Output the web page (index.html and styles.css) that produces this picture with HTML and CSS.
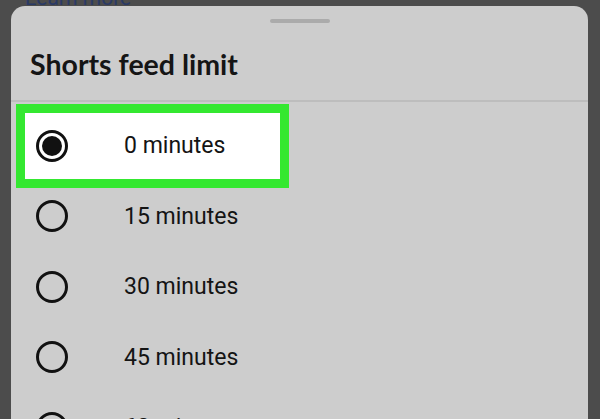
FILE: index.html
```html
<!DOCTYPE html>
<html lang="en">
<head>
  <meta charset="UTF-8" />
  <meta name="viewport" content="width=device-width, initial-scale=1.0" />
  <title>Shorts feed limit</title>
  <link rel="stylesheet" href="styles.css">
</head>
<body>
  <div class="behind">
    <a class="learn-more" href="#">Learn more</a>
  </div>

  <div class="sheet">
    <div class="handle"></div>
    <h1 class="sheet-title">Shorts feed limit</h1>

    <ul class="options">
      <li class="option highlight">
        <span class="radio checked"></span>
        <span class="label">0 minutes</span>
      </li>
      <li class="option">
        <span class="radio"></span>
        <span class="label">15 minutes</span>
      </li>
      <li class="option">
        <span class="radio"></span>
        <span class="label">30 minutes</span>
      </li>
      <li class="option">
        <span class="radio"></span>
        <span class="label">45 minutes</span>
      </li>
      <li class="option">
        <span class="radio"></span>
        <span class="label">60 minutes</span>
      </li>
    </ul>
  </div>
</body>
</html>
```

FILE: styles.css
```css
*, *::before, *::after {
  box-sizing: border-box;
  margin: 0;
  padding: 0;
}
html, body {
  height: 100%;
  overflow: hidden;
}
body {
  background: #4c4c4c; /* dimmed page behind the sheet */
  font-family: Roboto, 'Liberation Sans', sans-serif;
  color: #1a1a1a;
}
.behind {
  height: 6px;
  overflow: hidden;
  padding-left: 25px;
}
.learn-more {
  display: block;
  margin-top: -13px;
  font-size: 21px;
  line-height: 22px;
  color: #2a3a66;
  text-decoration: none;
}
.sheet {
  margin: 0 12px 0 11px;
  padding-top: 13px;
  height: 100%;
  background: #cdcdcd;
  border-radius: 14px 14px 0 0;
}
.handle {
  width: 60px;
  height: 4px;
  margin: 0 auto;
  border-radius: 2px;
  background: #ababab;
}
.sheet-title {
  margin-top: 24px;
  padding: 0 0 19px 19px;
  font-family: Lato, 'Open Sans', sans-serif;
  font-size: 28.5px;
  font-weight: 700;
  line-height: 34px;
  color: #151515;
  border-bottom: 2px solid #bdbdbd;
}
.options {
  list-style: none;
  padding-top: 8.5px;
}
.option {
  display: flex;
  align-items: center;
  height: 70.5px;
  padding-left: 25px;
}
.label {
  margin-left: 56px;
  font-size: 23px;
  color: #141414;
}
/* selected row, boxed in green */
.option.highlight {
  height: 83.5px;
  width: 273px;
  margin: -6.5px 0 -6.5px 5px;
  padding-left: 11px;
  background: #fff;
  border: 9px solid #34e830;
}
.radio {
  flex: none;
  width: 32px;
  height: 32px;
  border: 3px solid #111;
  border-radius: 50%;
  display: flex;
  align-items: center;
  justify-content: center;
}
.radio.checked::after {
  content: '';
  width: 20px;
  height: 20px;
  border-radius: 50%;
  background: #111;
}
```
